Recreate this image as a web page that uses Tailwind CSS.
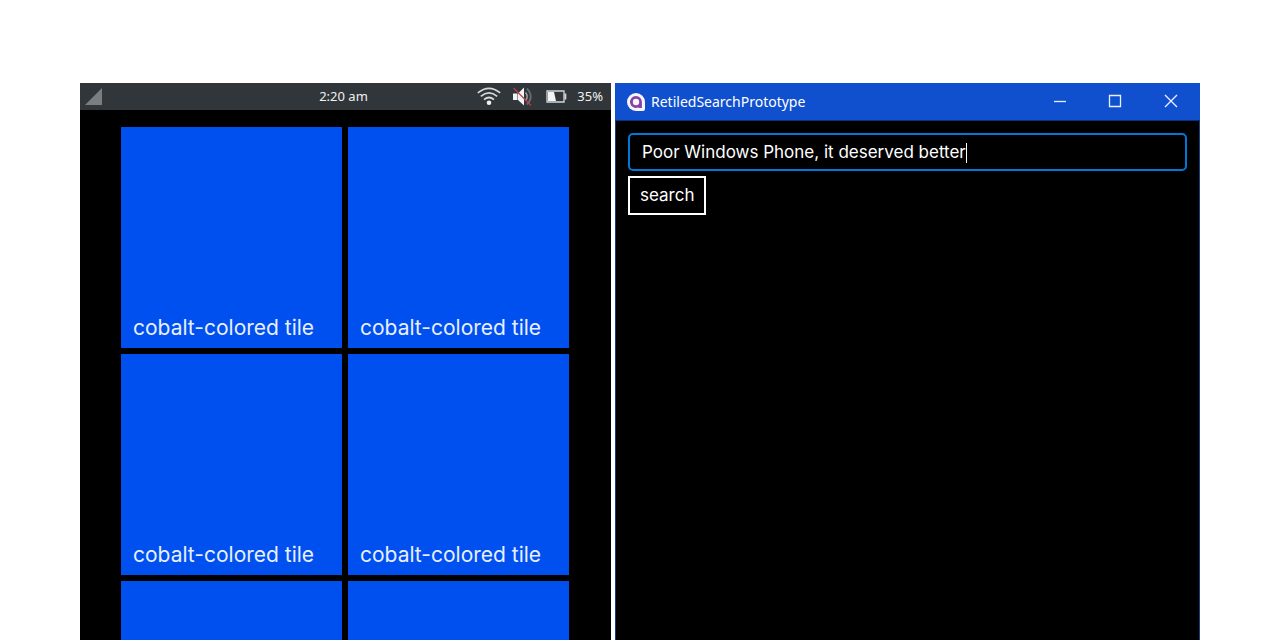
<!DOCTYPE html>
<html lang="en">
<head>
<meta charset="utf-8">
<meta name="viewport" content="width=device-width, initial-scale=1">
<title>Retiled</title>
<script src="https://cdn.jsdelivr.net/npm/@tailwindcss/browser@4"></script>
</head>
<body class="bg-white">
<main class="grid h-screen grid-cols-[531fr_585fr] gap-1 overflow-hidden px-20 pt-[83px]">
  <section class="flex min-h-0 flex-col overflow-hidden bg-black" aria-label="Start screen">
    <header class="grid h-[27px] shrink-0 grid-cols-[1fr_auto_1fr] items-center bg-[#31363b] pr-2 pl-1 font-['Noto_Sans',sans-serif] text-[13px] text-[#eff0f1]">
      <svg class="size-5" viewBox="0 0 20 20" aria-label="Signal"><path d="M1 18 18 1V18Z" fill="#7b7e81"/></svg>
      <time>2:20 am</time>
      <div class="flex items-center justify-end">
        <svg class="mr-3 h-5 w-6" viewBox="0 0 24 20" fill="none" stroke="#d5d7d8" stroke-width="1.7" aria-label="Wi-Fi"><path d="M0.800 5.800Q12-3.200 23.200 5.800M3.800 9.300Q12 2.500 20.200 9.300M7 12.600Q12 8.400 17 12.600"/><circle cx="12" cy="15.800" r="2.300" fill="#eff0f1" stroke="none"/></svg>
        <svg class="mr-3 h-5 w-5" viewBox="0 0 20 20" fill="none" aria-label="Muted"><path d="M0 6.500H4.500V13H0ZM5 6.500 11 0.500V18.500L5 13Z" fill="#f4f4f5"/><path d="M12.500 5.500Q16 9.500 12.500 13.500" stroke="#a0a3a5" stroke-width="1.500"/><path d="M14 1.500Q21.500 9.500 14 17.500" stroke="#6b6f73" stroke-width="1.700"/><path d="M0.500 1 18 18.500" stroke="#b8404f" stroke-width="1.300"/></svg>
        <svg class="mr-2.5 h-5 w-[22px]" viewBox="0 0 22 20" aria-label="Battery"><path d="M2 4H19V15H2Z" fill="none" stroke="#d5d7d8" stroke-width="1.300"/><path d="M3 5H9L11 14H3Z" fill="#f4f4f5"/><path d="M19.500 6.500H21.300V12.500H19.500Z" fill="#d5d7d8"/></svg>
        <span>35%</span>
      </div>
    </header>
    <div class="grid grid-cols-2 gap-1.5 pr-[42px] pl-[41px] pt-[17px] font-[Inter,sans-serif] text-[21px] leading-6 text-[#e8efff]">
      <button class="flex aspect-square items-end bg-[#0050ef] px-3 pb-2 text-left">cobalt-colored tile</button>
      <button class="flex aspect-square items-end bg-[#0050ef] px-3 pb-2 text-left">cobalt-colored tile</button>
      <button class="flex aspect-square items-end bg-[#0050ef] px-3 pb-2 text-left">cobalt-colored tile</button>
      <button class="flex aspect-square items-end bg-[#0050ef] px-3 pb-2 text-left">cobalt-colored tile</button>
      <button class="aspect-square bg-[#0050ef]" aria-label="Tile"></button>
      <button class="aspect-square bg-[#0050ef]" aria-label="Tile"></button>
    </div>
  </section>

  <section class="flex min-h-0 flex-col border-x border-[#0f4080] bg-black" aria-label="RetiledSearchPrototype">
    <header class="-mx-px flex h-[38px] shrink-0 items-center border-b border-[#0a3078] bg-[#1050cf] pl-3 text-white">
      <svg class="mr-1.5 size-[18px]" viewBox="0 0 18 18" aria-hidden="true"><path d="M9 0A9 9 0 1 0 9 18H16Q18 18 18 16V9A9 9 0 0 0 9 0Z" fill="#f8f5fb"/><path d="M9 3.100A5.900 5.900 0 1 0 11.500 14.300V15H14.900V9A5.900 5.900 0 0 0 9 3.100Z" fill="#8345a5"/><circle cx="9" cy="9" r="3.200" fill="#f8f5fb"/></svg>
      <h1 class="font-['Noto_Sans',sans-serif] text-sm">RetiledSearchPrototype</h1>
      <div class="ml-auto flex self-stretch pr-px pb-px">
        <button class="flex w-[55px] items-center justify-center" aria-label="Minimize"><svg class="size-3.5" viewBox="0 0 14 14" stroke="#e8efff" stroke-width="1.300"><path d="M1 7.500H13"/></svg></button>
        <button class="flex w-[55px] items-center justify-center" aria-label="Maximize"><svg class="size-3.5" viewBox="0 0 14 14" fill="none" stroke="#e8efff" stroke-width="1.300"><path d="M1.500 1.500H12.500V12.500H1.500Z"/></svg></button>
        <button class="flex w-[57px] items-center justify-center" aria-label="Close"><svg class="size-3.5" viewBox="0 0 14 14" stroke="#e8efff" stroke-width="1.400"><path d="M1 1 13 13M13 1 1 13"/></svg></button>
      </div>
    </header>
    <form class="flex flex-col items-start gap-[5px] p-3 font-[Inter,sans-serif] text-[17px] text-white">
      <label class="flex h-[38px] w-full items-center rounded-[5px] border-2 border-[#0078d7] px-3 pt-0.5">
        <input type="text" aria-label="Search query" value="Poor Windows Phone, it deserved better" class="field-sizing-content bg-transparent caret-transparent outline-none">
        <span class="h-5 w-px bg-white"></span>
      </label>
      <button type="button" class="h-[39px] border-2 border-white px-2.5">search</button>
    </form>
  </section>
</main>
</body>
</html>
